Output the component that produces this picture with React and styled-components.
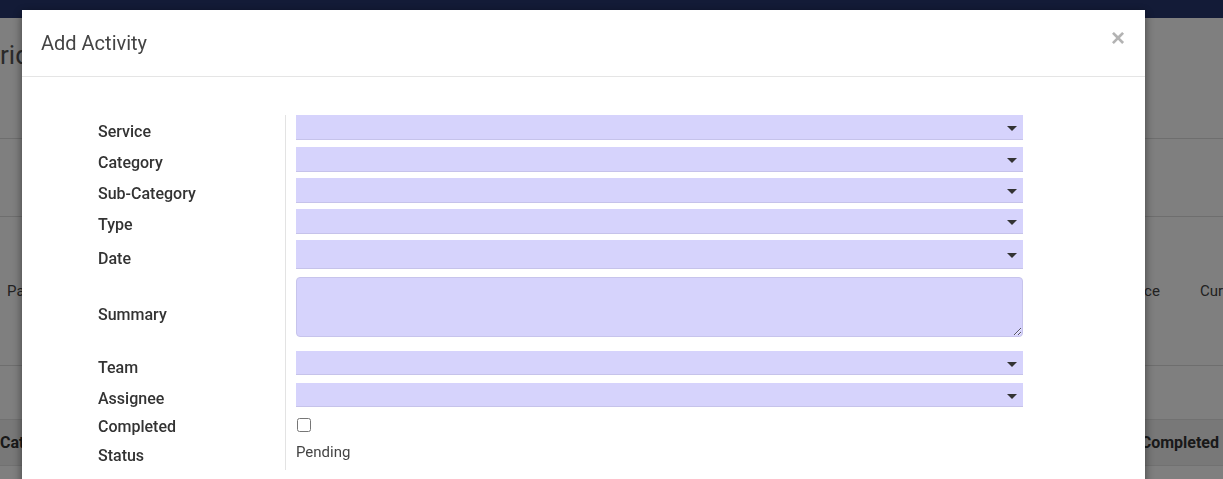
import React from "react"
import styled, { createGlobalStyle } from "styled-components"

const GlobalStyle = createGlobalStyle`
    html, body {
        margin: 0;
        padding: 0;
        overflow: hidden;
        background: #fff;
    }
    body {
        font-family: Roboto, "Liberation Sans", sans-serif;
        color: #333;
    }`

// page behind the dialog
const Page = styled.div`
    width: 1223px;
    height: 479px;
    overflow: hidden;`

const NavBar = styled.div`
    height: 18px;
    background: #26366e;`

const PageHead = styled.div`
    height: 121px;
    border-bottom: 1px solid #dcdcdc;
    padding-top: 22px;
    box-sizing: border-box;
    font-size: 26px;
    color: #555;`

const Toolbar = styled.div`
    height: 78px;
    border-bottom: 1px solid #dcdcdc;
    box-sizing: border-box;`

const FilterRow = styled.div`
    height: 149px;
    border-bottom: 1px solid #dcdcdc;
    box-sizing: border-box;
    display: flex;
    align-items: center;
    justify-content: space-between;
    padding-left: 7px;
    font-size: 15px;
    color: #444;`

const FilterRight = styled.div`
    display: flex;
    gap: 40px;
    margin-right: 0;`

const Spacer = styled.div`
    height: 53px;`

const TableHead = styled.div`
    height: 45px;
    background: #f0f0f0;
    border-top: 1px solid #e2e2e2;
    border-bottom: 1px solid #e2e2e2;
    display: flex;
    align-items: center;
    justify-content: space-between;
    padding-right: 4px;
    font-size: 16px;
    font-weight: 700;
    color: #333;`

const Backdrop = styled.div`
    position: fixed;
    inset: 0;
    background: rgba(0, 0, 0, 0.5);`

// dialog
const Modal = styled.div`
    position: fixed;
    top: 10px;
    left: 22px;
    width: 1123px;
    height: 520px;
    background: #fff;
    box-shadow: 0 3px 9px rgba(0, 0, 0, 0.5);`

const ModalHeader = styled.div`
    height: 67px;
    border-bottom: 1px solid #e5e5e5;
    box-sizing: border-box;
    display: flex;
    align-items: center;
    justify-content: space-between;
    padding: 0 20px 0 19px;`

const Title = styled.h4`
    margin: 0;
    font-size: 20px;
    font-weight: 400;
    color: #444;`

const Close = styled.button`
    border: none;
    background: none;
    padding: 0;
    font-family: "Liberation Sans", sans-serif;
    font-size: 24px;
    font-weight: 700;
    line-height: 1;
    color: #b3b3b3;
    margin-top: -10px;`

const ModalBody = styled.div`
    padding: 38px 122px 0 76px;`

const Form = styled.div`
    display: grid;
    grid-template-columns: 187px 738px;`

const Label = styled.label`
    align-self: center;
    font-size: 16px;
    font-weight: 500;
    color: #333;`

const Cell = styled.div`
    border-left: 1px solid #e3e3e3;
    padding: ${p => p.$top || 0}px 0 ${p => p.$pad}px 10px;`

const Select = styled.div`
    height: ${p => p.$h}px;
    box-sizing: border-box;
    background: #d6d3fc;
    border-bottom: 1px solid #c6c3ea;
    display: flex;
    align-items: center;
    justify-content: flex-end;
    padding: 3px 6px 0 0;`

const Summary = styled.textarea`
    display: block;
    width: 100%;
    height: 60px;
    box-sizing: border-box;
    background: #d6d3fc;
    border: 1px solid #c7c4ec;
    border-radius: 4px;
    resize: vertical;
    margin: 0;
    font-family: inherit;`

const Check = styled.input`
    display: block;
    margin: 0 0 0 1px;
    width: 14px;
    height: 14px;`

const StatusText = styled.div`
    font-size: 15px;
    line-height: 20px;
    color: #444;`

const Caret = () => (
    <svg width="10" height="5" viewBox="0 0 10 5">
        <path d="M0 0h10L5 5z" fill="#333" />
    </svg>
)

const fields = [
    { label: "Service", h: 25, pad: 7 },
    { label: "Category", h: 25, pad: 6 },
    { label: "Sub-Category", h: 25, pad: 6 },
    { label: "Type", h: 25, pad: 6 },
    { label: "Date", h: 29, pad: 8 },
]

export default function App () {
    return (
        <>
            <GlobalStyle />
            <Page>
                <NavBar />
                <PageHead>rid</PageHead>
                <Toolbar />
                <FilterRow>
                    <span>Pa</span>
                    <FilterRight>
                        <span>Balance</span>
                        <span>Cur</span>
                    </FilterRight>
                </FilterRow>
                <Spacer />
                <TableHead>
                    <span>Cate</span>
                    <span>Completed</span>
                </TableHead>
            </Page>
            <Backdrop />
            <Modal>
                <ModalHeader>
                    <Title>Add Activity</Title>
                    <Close>×</Close>
                </ModalHeader>
                <ModalBody>
                    <Form>
                        {fields.map(f => (
                            <React.Fragment key={f.label}>
                                <Label>{f.label}</Label>
                                <Cell $pad={f.pad}>
                                    <Select $h={f.h}><Caret /></Select>
                                </Cell>
                            </React.Fragment>
                        ))}
                        <Label>Summary</Label>
                        <Cell $pad={14}>
                            <Summary />
                        </Cell>
                        <Label>Team</Label>
                        <Cell $pad={8}>
                            <Select $h={24}><Caret /></Select>
                        </Cell>
                        <Label>Assignee</Label>
                        <Cell $pad={6}>
                            <Select $h={24}><Caret /></Select>
                        </Cell>
                        <Label>Completed</Label>
                        <Cell $top={5} $pad={8}>
                            <Check type="checkbox" />
                        </Cell>
                        <Label>Status</Label>
                        <Cell $top={2} $pad={8}>
                            <StatusText>Pending</StatusText>
                        </Cell>
                    </Form>
                </ModalBody>
            </Modal>
        </>
    )
}
